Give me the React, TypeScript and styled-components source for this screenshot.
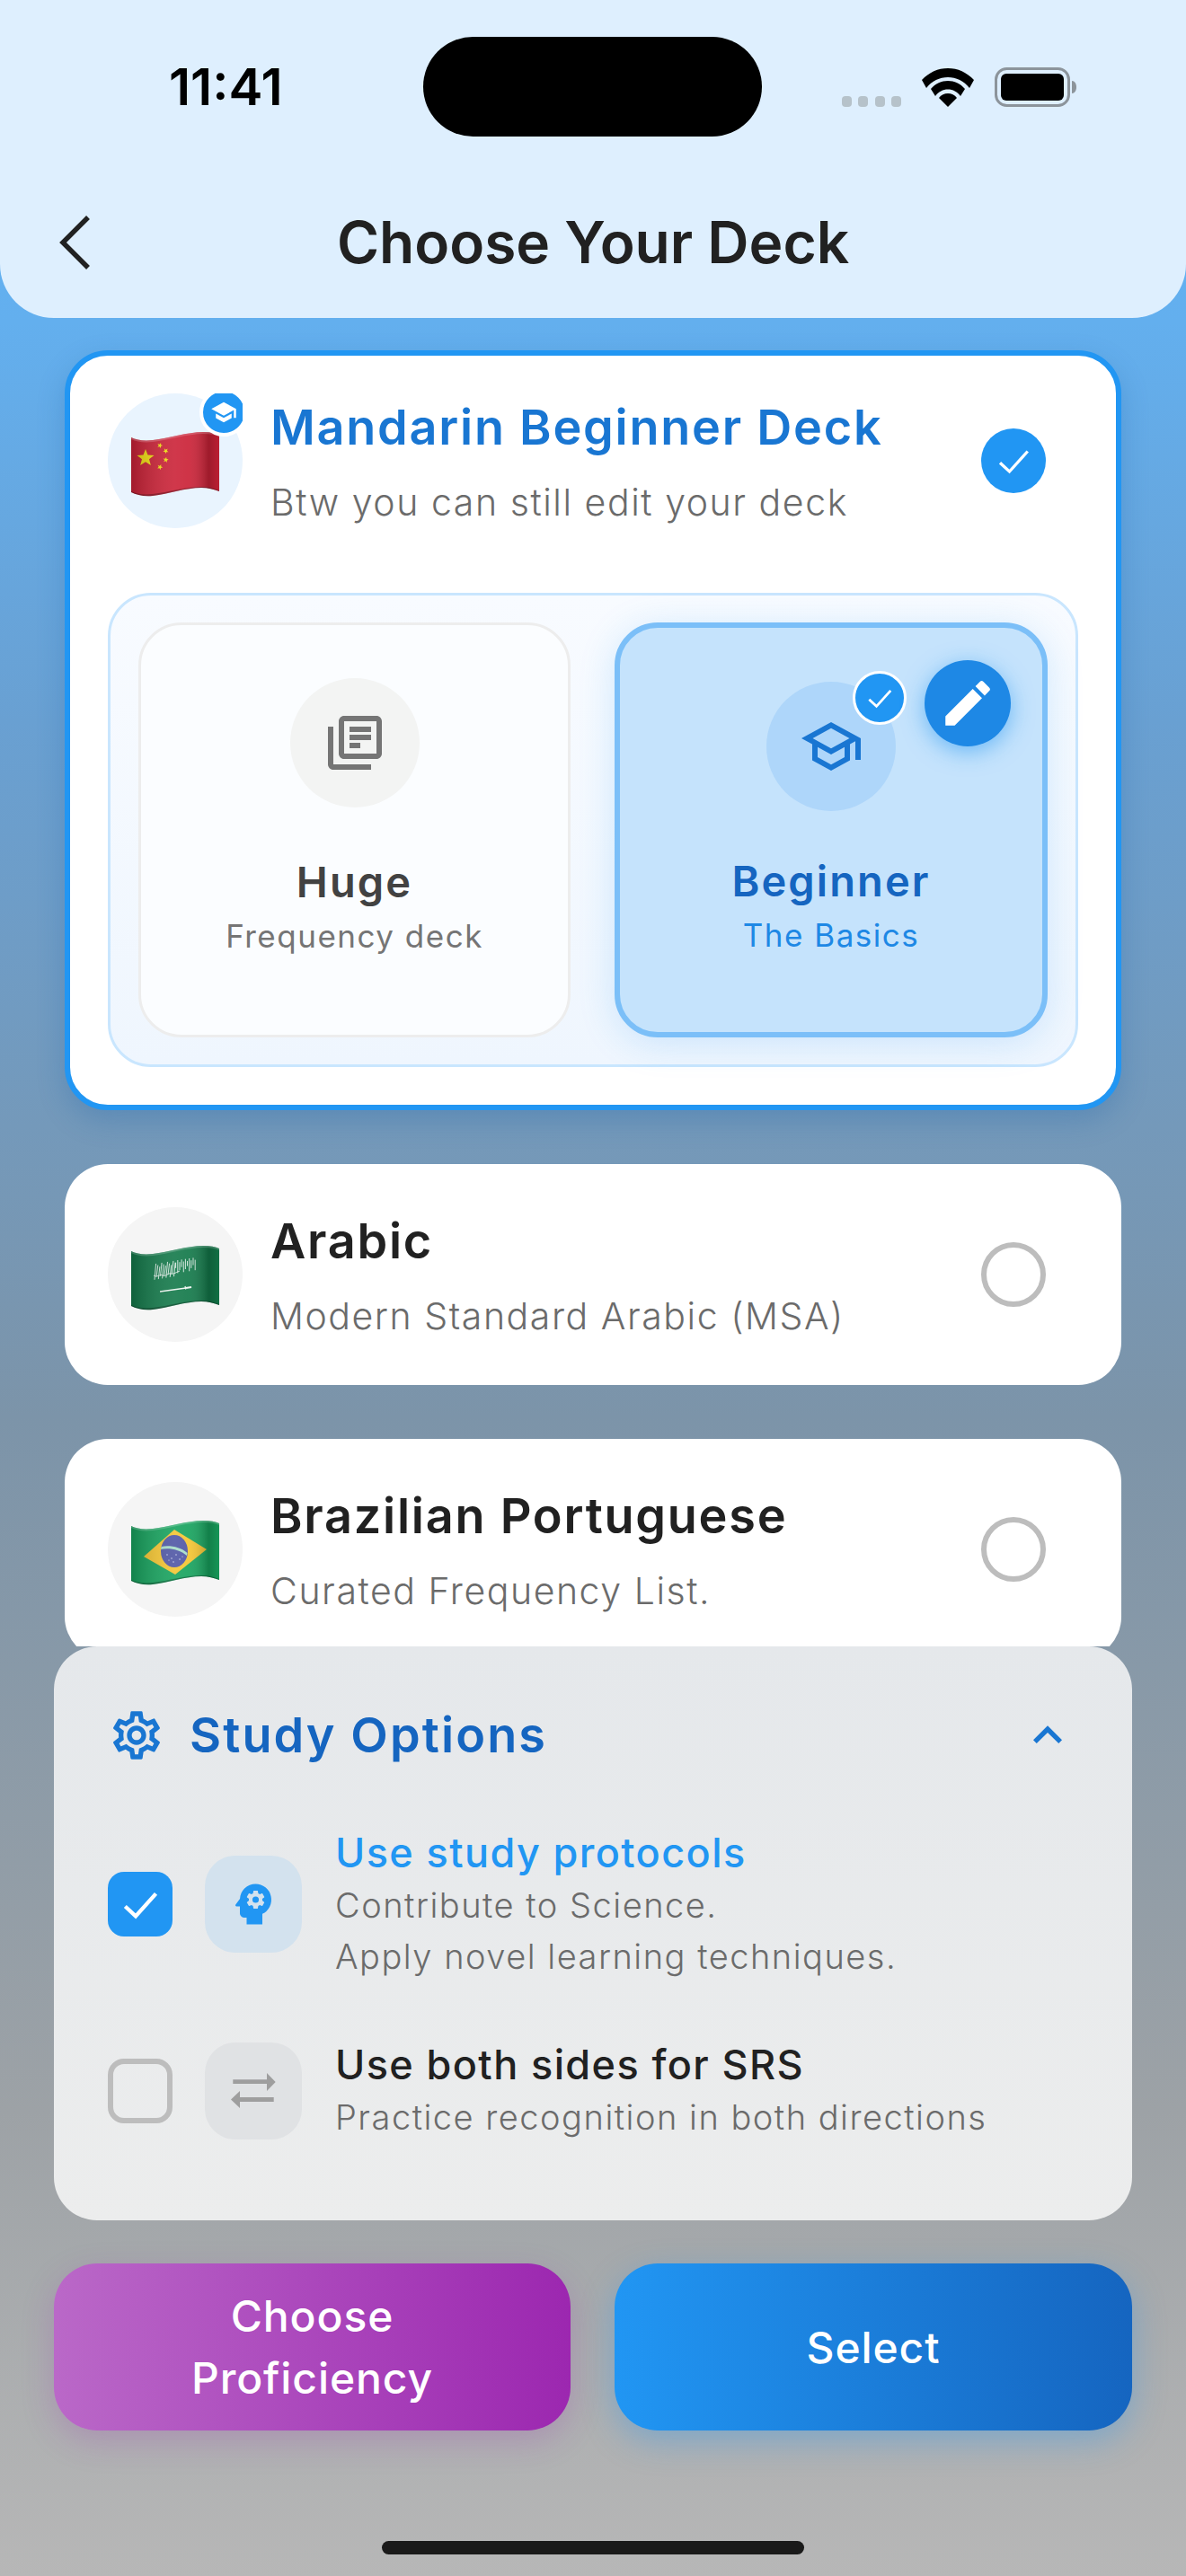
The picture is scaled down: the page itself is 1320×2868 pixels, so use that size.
import React from "react";
import styled, { createGlobalStyle } from "styled-components";
import {
  MdEdit,
  MdKeyboardArrowUp,
  MdOutlineLibraryBooks,
  MdOutlineSchool,
  MdOutlineSettings,
  MdPsychology,
  MdSchool,
} from "react-icons/md";

const Global = createGlobalStyle`
  html, body { margin: 0; padding: 0; background: #b6b6b6; }
  * { box-sizing: border-box; }
  body { font-family: Inter, "Liberation Sans", sans-serif; }
`;

const Page = styled.div`
  width: 1320px;
  height: 2868px;
  overflow: hidden;
  display: flex;
  flex-direction: column;
  background: linear-gradient(180deg, #62b4f8 0%, #63afee 12.5%, #69a0d2 28%, #7c94a9 55%, #9da2a6 82%, #b7b7b7 100%);
`;

const Header = styled.header`
  height: 354px;
  flex: none;
  background: #deeffe;
  border-radius: 0 0 60px 60px;
  padding-top: 41px;
`;

const StatusBar = styled.div`
  display: grid;
  grid-template-columns: 471px 377px 472px;
  align-items: center;
`;

const Time = styled.div`
  padding-left: 188px;
  font-size: 57px;
  font-weight: 600;
  line-height: 64px;
  color: #000;
`;

const Island = styled.div`
  height: 111px;
  border-radius: 56px;
  background: #000;
`;

const StatusIcons = styled.div`
  display: flex;
  align-items: flex-end;
  padding: 0 0 0 89px;
  gap: 23px;
`;

const Nav = styled.div`
  margin-top: 78px;
  height: 80px;
  display: grid;
  grid-template-columns: 120px 1fr 120px;
  align-items: center;
`;

const Back = styled.div`
  padding-left: 62px;
  display: flex;
  align-items: center;
`;

const Title = styled.h1`
  margin: 0;
  text-align: center;
  font-size: 64px;
  font-weight: 600;
  line-height: 80px;
  color: #212121;
`;

const List = styled.div`
  height: 1479px;
  flex: none;
  overflow: hidden;
  padding: 36px 72px 0;
  display: flex;
  flex-direction: column;
  gap: 60px;
`;

const DeckCard = styled.section<{ $selected?: boolean }>`
  flex: none;
  width: 1176px;
  background: #fff;
  border-radius: 48px;
  ${(p) =>
    p.$selected
      ? `border: 6px solid #2196f3; padding: 42px 42px 42px; box-shadow: 0 12px 30px rgba(33,100,170,.28);`
      : `padding: 48px 48px; height: 246px;`}
`;

const DeckRow = styled.div`
  display: flex;
  align-items: center;
  height: 150px;
  padding-right: 36px;
`;

const Avatar = styled.div<{ $selected?: boolean }>`
  position: relative;
  flex: none;
  width: 150px;
  height: 150px;
  padding-top: 7px;
  border-radius: 50%;
  overflow: hidden;
  background: ${(p) => (p.$selected ? "#e9f4fe" : "#f5f5f5")};
  display: flex;
  align-items: center;
  justify-content: center;
`;

const AvatarFrame = styled.div`
  position: relative;
  flex: none;
  width: 150px;
  height: 150px;
  overflow: hidden;
`;

const CapBadge = styled.div`
  position: absolute;
  top: -6px;
  right: -6px;
  width: 54px;
  height: 54px;
  border-radius: 50%;
  border: 4px solid #fff;
  background: #2196f3;
  color: #fff;
  display: flex;
  align-items: center;
  justify-content: center;
`;

const DeckText = styled.div`
  flex: 1;
  margin-left: 31px;
  display: flex;
  flex-direction: column;
  gap: 25px;
  padding-top: 2px;
`;

const DeckName = styled.div<{ $selected?: boolean }>`
  font-size: 54px;
  font-weight: 600;
  line-height: 64px;
  letter-spacing: 1.75px;
  color: ${(p) => (p.$selected ? "#1976d2" : "#212121")};
`;

const DeckSub = styled.div`
  font-size: 41px;
  font-weight: 300;
  line-height: 52px;
  letter-spacing: 1.55px;
  color: #6b6b6b;
`;

const SelectedDot = styled.div`
  width: 72px;
  height: 72px;
  flex: none;
  border-radius: 50%;
  background: #2196f3;
  color: #fff;
  display: flex;
  align-items: center;
  justify-content: center;
`;

const Radio = styled.div`
  width: 72px;
  height: 72px;
  flex: none;
  border-radius: 50%;
  border: 6px solid #bdbdbd;
`;

const LevelPanel = styled.div`
  margin-top: 72px;
  height: 528px;
  border: 3px solid #c9e6fe;
  border-radius: 48px;
  background: linear-gradient(180deg, #f8fbff 0%, #eff6fe 100%);
  padding: 30px 31px;
  display: grid;
  grid-template-columns: 481px 482px;
  gap: 49px;
`;

const LevelCard = styled.div<{ $active?: boolean }>`
  position: relative;
  height: 462px;
  border-radius: 48px;
  display: flex;
  flex-direction: column;
  align-items: center;
  ${(p) =>
    p.$active
      ? `border: 6px solid #7bbff8; background: #c5e3fc; padding-top: 60px; box-shadow: 0 6px 40px rgba(33,150,243,.18);`
      : `border: 3px solid #ededed; background: #fbfdff; padding-top: 59px;`}
`;

const LevelIcon = styled.div<{ $active?: boolean }>`
  position: relative;
  width: 144px;
  height: 144px;
  flex: none;
  border-radius: 50%;
  background: ${(p) => (p.$active ? "#aed6fa" : "#f3f4f3")};
  color: ${(p) => (p.$active ? "#1976d2" : "#757575")};
  display: flex;
  align-items: center;
  justify-content: center;
`;

const MiniCheck = styled.div`
  position: absolute;
  top: -12px;
  right: -12px;
  width: 60px;
  height: 60px;
  border-radius: 50%;
  border: 3px solid #fff;
  background: #2196f3;
  color: #fff;
  display: flex;
  align-items: center;
  justify-content: center;
`;

const EditFab = styled.div`
  position: absolute;
  top: 36px;
  right: 35px;
  width: 96px;
  height: 96px;
  border-radius: 50%;
  background: #1e88e5;
  color: #fff;
  box-shadow: 0 6px 24px rgba(33, 150, 243, 0.55);
  display: flex;
  align-items: center;
  justify-content: center;
`;

const LevelName = styled.div<{ $active?: boolean }>`
  margin-top: ${(p) => (p.$active ? "50px" : "55px")};
  font-size: 47px;
  font-weight: 600;
  line-height: 56px;
  letter-spacing: 2.1px;
  color: ${(p) => (p.$active ? "#1565c0" : "#424242")};
`;

const LevelSub = styled.div<{ $active?: boolean }>`
  margin-top: 10px;
  font-size: 35px;
  font-weight: 400;
  line-height: 44px;
  letter-spacing: 1.5px;
  color: ${(p) => (p.$active ? "#1e88e5" : "#757575")};
`;

const OptionsPanel = styled.section`
  flex: none;
  margin: 0 60px;
  height: 639px;
  border-radius: 48px;
  background: linear-gradient(180deg, #e5e8eb 0%, #eceded 100%);
  padding: 67px 62px 0 60px;
`;

const OptionsHead = styled.div`
  height: 64px;
  display: flex;
  align-items: center;
  color: #1976d2;
`;

const OptionsTitle = styled.div`
  flex: 1;
  margin-left: 27px;
  font-size: 54px;
  font-weight: 600;
  line-height: 64px;
  letter-spacing: 2.1px;
  color: #1565c0;
`;

const OptionList = styled.div`
  margin-top: 69px;
  display: flex;
  flex-direction: column;
  gap: 62px;
`;

const OptionRow = styled.div`
  display: flex;
  align-items: center;
`;

const CheckBox = styled.div<{ $on?: boolean }>`
  width: 72px;
  height: 72px;
  flex: none;
  border-radius: 18px;
  color: #fff;
  display: flex;
  align-items: center;
  justify-content: center;
  ${(p) => (p.$on ? "background: #2196f3;" : "border: 6px solid #bdbdbd;")}
`;

const OptionIcon = styled.div<{ $on?: boolean }>`
  margin-left: 36px;
  width: 108px;
  height: 108px;
  flex: none;
  border-radius: 34px;
  background: ${(p) => (p.$on ? "#d3e2ee" : "#e0e2e4")};
  color: ${(p) => (p.$on ? "#2196f3" : "#9e9e9e")};
  display: flex;
  align-items: center;
  justify-content: center;
`;

const OptionText = styled.div`
  margin-left: 37px;
`;

const OptionName = styled.div<{ $on?: boolean }>`
  font-size: 45px;
  font-weight: 500;
  line-height: 60px;
  letter-spacing: 1.4px;
  color: ${(p) => (p.$on ? "#2196f3" : "#212121")};
`;

const OptionSub = styled.div`
  font-size: 38px;
  font-weight: 300;
  line-height: 57px;
  letter-spacing: 1.5px;
  color: #6b6b6b;
`;

const Actions = styled.div`
  flex: none;
  margin-top: 48px;
  padding: 0 60px;
  display: grid;
  grid-template-columns: 575px 576px;
  gap: 49px;
`;

const ActionButton = styled.div<{ $tone: "purple" | "blue" }>`
  height: 186px;
  border-radius: 48px;
  color: #fff;
  font-size: 48px;
  font-weight: 500;
  line-height: 69px;
  letter-spacing: 0.9px;
  text-align: center;
  display: flex;
  align-items: center;
  justify-content: center;
  ${(p) =>
    p.$tone === "purple"
      ? `background: linear-gradient(90deg, #ba68c8, #9c27b0); box-shadow: 0 12px 36px rgba(156,39,176,.22);`
      : `background: linear-gradient(90deg, #2196f3, #1565c0); box-shadow: 0 12px 36px rgba(33,150,243,.35);`}
`;

const HomeBar = styled.div`
  flex: none;
  width: 470px;
  height: 15px;
  margin: 123px auto 0;
  border-radius: 8px;
  background: #1a1a1a;
`;

const Tick = ({ size, w }: { size: number; w: number }) => (
  <svg width={size} height={size} viewBox="0 0 24 24" fill="none" stroke="currentColor" strokeWidth={w}>
    <path d="M2 13.5 L9 20 L22.5 5" />
  </svg>
);

const SwapArrows = () => (
  <svg width="50" height="40" viewBox="0 0 50 40" fill="currentColor">
    <path d="M2.300 7.300H40V0L49.700 10L40 20V12H2.300Z" />
    <path d="M47.700 27H10V20L0 29.500L10 39V32H47.700Z" />
  </svg>
);

const WAVE =
  "M0 6C6 9 14 10 24 9C42 7 62 0 80 0C88 0 94 1 98 3L98 66C92 64 86 62 78 62C60 62 42 69 24 71C14 72 6 70 0 67Z";

const Star = ({ x, y, r, rot = 0 }: { x: number; y: number; r: number; rot?: number }) => {
  const pts: string[] = [];
  for (let i = 0; i < 10; i++) {
    const a = ((i * 36 - 90 + rot) * Math.PI) / 180;
    const d = i % 2 ? r * 0.42 : r;
    pts.push(`${(x + d * Math.cos(a)).toFixed(2)},${(y + d * Math.sin(a)).toFixed(2)}`);
  }
  return <polygon points={pts.join(" ")} fill="#f0de12" />;
};

const Flag = ({ id, base, children }: { id: string; base: string; children?: React.ReactNode }) => (
  <svg width="98" height="72" viewBox="0 0 98 72">
    <defs>
      <linearGradient id={`${id}-h`} x1="0" x2="1" y1="0" y2="0">
        <stop offset="0" stopColor="#000" stopOpacity=".2" />
        <stop offset=".5" stopColor="#fff" stopOpacity=".1" />
        <stop offset=".65" stopColor="#fff" stopOpacity=".08" />
        <stop offset=".88" stopColor="#000" stopOpacity=".22" />
        <stop offset="1" stopColor="#000" stopOpacity=".08" />
      </linearGradient>
      <clipPath id={`${id}-c`}>
        <path d={WAVE} />
      </clipPath>
    </defs>
    <g clipPath={`url(#${id}-c)`}>
      <rect width="98" height="72" fill={base} />
      {children}
      <rect width="98" height="72" fill={`url(#${id}-h)`} />
      <path d="M0 66C6 69 14 70 24 69C42 67 60 61 78 61C86 61 92 63 98 65L98 72L0 72Z" fill="#000" opacity=".28" />
      <path d="M0 6C6 9 14 10 24 9C42 7 62 0 80 0C88 0 94 1 98 3L98 5C94 3 88 2 80 2C62 2 42 9 24 11C14 12 6 11 0 8Z" fill="#fff" opacity=".18" />
    </g>
  </svg>
);

const ChinaFlag = () => (
  <Flag id="cn" base="#cb2237">
    <Star x={16} y={29} r={10} />
    <Star x={32} y={15} r={3.2} rot={20} />
    <Star x={38.5} y={21} r={3.2} rot={40} />
    <Star x={38.5} y={31} r={3.2} rot={10} />
    <Star x={32} y={39} r={3.2} rot={25} />
  </Flag>
);

const emblem = (() => {
  let d = "";
  for (let i = 0; i < 22; i++) {
    const x = 26 + i * 2.15;
    const left = i < 11;
    const top = 20 - (x - 25) * 0.15 + (left ? (i % 3) * 2 : (i % 2) * 2.5);
    const bottom = 38 - (x - 25) * 0.17 - (left ? (i % 2) * 3 : (i % 3) * 3 + 3);
    d += `M${x.toFixed(1)} ${bottom.toFixed(1)}L${(x + (left ? 1.6 : 0)).toFixed(1)} ${top.toFixed(1)}`;
  }
  return d;
})();

const SaudiFlag = () => (
  <Flag id="sa" base="#13794a">
    <g stroke="#e7f2ec" fill="none" strokeWidth=".9">
      <path d={emblem} />
      <path d="M25 33c4 3 7-2 10 0s6-3 9-2 7-2 10-3" />
    </g>
    <path d="M32 51L61 47" stroke="#eef6f1" strokeWidth="1.3" />
    <path d="M60 45l.8 3.500" stroke="#eef6f1" strokeWidth="1.2" />
    <path d="M61 47L67 46" stroke="#eef6f1" strokeWidth="2" />
  </Flag>
);

const BrazilFlag = () => (
  <Flag id="br" base="#17a35e">
    <polygon points="48,10 84,32 49,60 14,40" fill="#f4c531" />
    <ellipse cx="48" cy="34" rx="15" ry="18" fill="#4f56a5" />
    <path d="M33.5 29C42 27 55 29 62.5 36L62 39C54 32 42 30 33 32Z" fill="#a6dcc8" />
    <g fill="#dfe3f5">
      <circle cx="40" cy="38" r=".7" /><circle cx="45" cy="42" r=".7" /><circle cx="50" cy="38" r=".7" />
      <circle cx="54" cy="43" r=".7" /><circle cx="47" cy="46" r=".7" /><circle cx="42" cy="44" r=".6" />
      <circle cx="57" cy="40" r=".6" />
    </g>
  </Flag>
);

const Wifi = () => (
  <svg width="58" height="43" viewBox="0 0 58 43" fill="#000">
    <path d="M29 0C18 0 8 4.500 0 13L5 22C11 14 20 10 29 10S47 14 53 22L58 13C50 4.500 40 0 29 0Z" />
    <path d="M29 14C22 14 15 17 10 23L15 31C18.500 26 23.500 23.500 29 23.500S39.500 26 43 31L48 23C43 17 36 14 29 14Z" />
    <path d="M29 28C25 28 21.500 29.500 19 33L29 43L39 33C36.500 29.500 33 28 29 28Z" />
  </svg>
);

const Battery = () => (
  <svg width="92" height="44" viewBox="0 0 92 44">
    <rect x="1.500" y="1.500" width="81" height="41" rx="12" fill="none" stroke="#8c949b" strokeWidth="3" />
    <rect x="7" y="7" width="70" height="30" rx="6" fill="#000" />
    <path d="M86 15c3 0 5 3 5 7s-2 7-5 7z" fill="#8c949b" />
  </svg>
);

const Signal = () => (
  <svg width="66" height="12" viewBox="0 0 66 12" fill="#b6c2ca">
    <rect x="0" y="0" width="11" height="12" rx="4" />
    <rect x="18" y="0" width="11" height="12" rx="4" />
    <rect x="37" y="0" width="11" height="12" rx="4" />
    <rect x="55" y="0" width="11" height="12" rx="4" />
  </svg>
);

export default function App() {
  return (
    <Page>
      <Global />
      <Header>
        <StatusBar>
          <Time>11:41</Time>
          <Island />
          <StatusIcons>
            <Signal />
            <Wifi />
            <Battery />
          </StatusIcons>
        </StatusBar>
        <Nav>
          <Back>
            <svg width="40" height="62" viewBox="0 0 40 62" fill="none" stroke="#212121" strokeWidth="5.500">
              <path d="M36 3L8 31L36 59" />
            </svg>
          </Back>
          <Title>Choose Your Deck</Title>
          <div />
        </Nav>
      </Header>

      <List>
        <DeckCard $selected>
          <DeckRow>
            <AvatarFrame>
              <Avatar $selected>
                <ChinaFlag />
              </Avatar>
              <CapBadge>
                <MdSchool size={30} />
              </CapBadge>
            </AvatarFrame>
            <DeckText>
              <DeckName $selected>Mandarin Beginner Deck</DeckName>
              <DeckSub>Btw you can still edit your deck</DeckSub>
            </DeckText>
            <SelectedDot>
              <Tick size={36} w={2.2} />
            </SelectedDot>
          </DeckRow>
          <LevelPanel>
            <LevelCard>
              <LevelIcon>
                <MdOutlineLibraryBooks size={72} />
              </LevelIcon>
              <LevelName>Huge</LevelName>
              <LevelSub>Frequency deck</LevelSub>
            </LevelCard>
            <LevelCard $active>
              <LevelIcon $active>
                <MdOutlineSchool size={72} />
                <MiniCheck>
                  <Tick size={28} w={2.4} />
                </MiniCheck>
              </LevelIcon>
              <LevelName $active>Beginner</LevelName>
              <LevelSub $active>The Basics</LevelSub>
              <EditFab>
                <MdEdit size={66} />
              </EditFab>
            </LevelCard>
          </LevelPanel>
        </DeckCard>

        <DeckCard>
          <DeckRow>
            <Avatar>
              <SaudiFlag />
            </Avatar>
            <DeckText>
              <DeckName>Arabic</DeckName>
              <DeckSub>Modern Standard Arabic (MSA)</DeckSub>
            </DeckText>
            <Radio />
          </DeckRow>
        </DeckCard>

        <DeckCard>
          <DeckRow>
            <Avatar>
              <BrazilFlag />
            </Avatar>
            <DeckText>
              <DeckName>Brazilian Portuguese</DeckName>
              <DeckSub>Curated Frequency List.</DeckSub>
            </DeckText>
            <Radio />
          </DeckRow>
        </DeckCard>
      </List>

      <OptionsPanel>
        <OptionsHead>
          <MdOutlineSettings size={64} />
          <OptionsTitle>Study Options</OptionsTitle>
          <MdKeyboardArrowUp size={64} />
        </OptionsHead>
        <OptionList>
          <OptionRow>
            <CheckBox $on>
              <Tick size={40} w={2.6} />
            </CheckBox>
            <OptionIcon $on>
              <MdPsychology size={60} />
            </OptionIcon>
            <OptionText>
              <OptionName $on>Use study protocols</OptionName>
              <OptionSub>Contribute to Science.</OptionSub>
              <OptionSub>Apply novel learning techniques.</OptionSub>
            </OptionText>
          </OptionRow>
          <OptionRow>
            <CheckBox />
            <OptionIcon>
              <SwapArrows />
            </OptionIcon>
            <OptionText>
              <OptionName>Use both sides for SRS</OptionName>
              <OptionSub>Practice recognition in both directions</OptionSub>
            </OptionText>
          </OptionRow>
        </OptionList>
      </OptionsPanel>

      <Actions>
        <ActionButton $tone="purple">
          Choose
          <br />
          Proficiency
        </ActionButton>
        <ActionButton $tone="blue">Select</ActionButton>
      </Actions>
      <HomeBar />
    </Page>
  );
}
